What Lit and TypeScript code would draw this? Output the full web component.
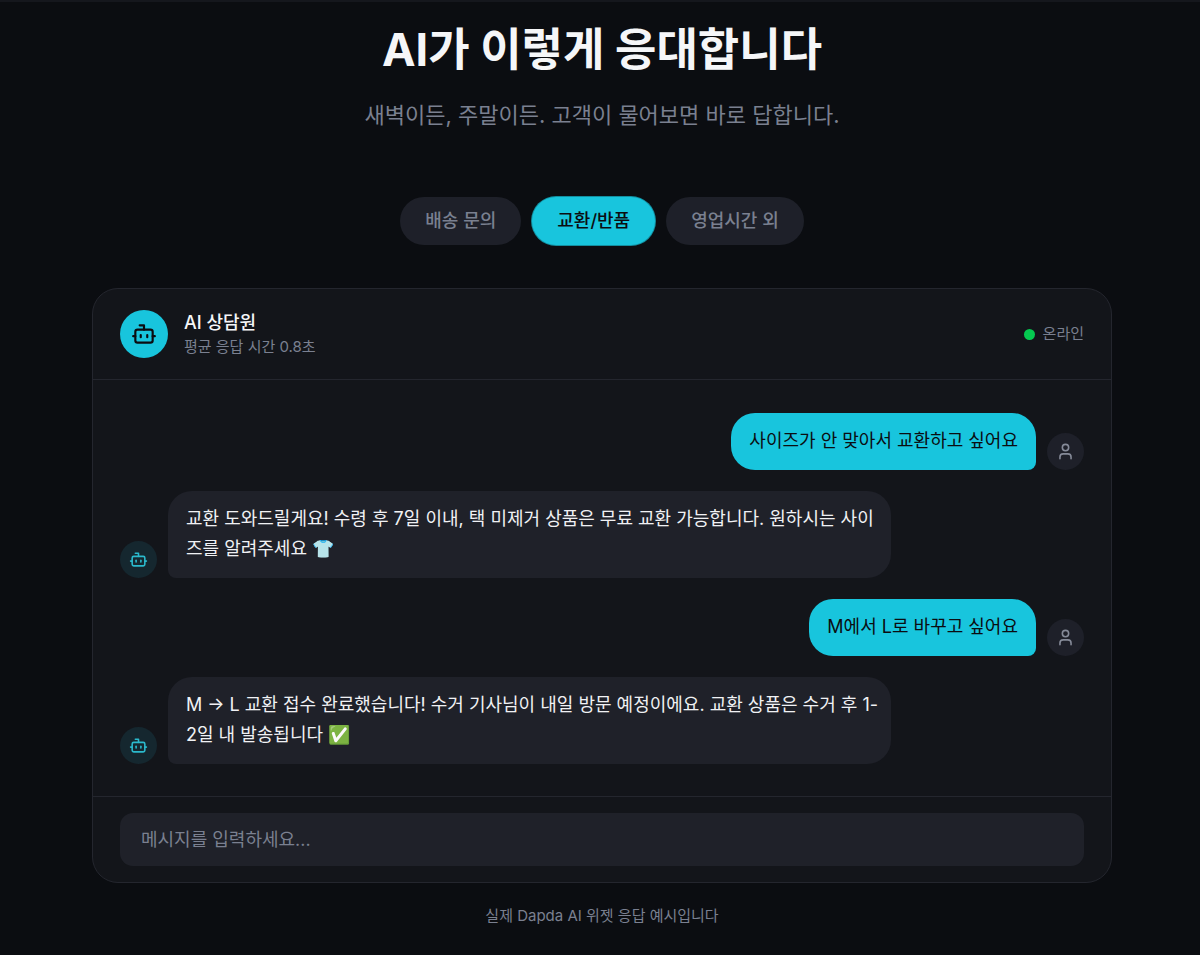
import { LitElement, html, css, svg } from "lit";
import { customElement, property, state } from "lit/decorators.js";
import { classMap } from "lit/directives/class-map.js";

type Message = { from: "user" | "bot"; text: string };

const botShapes = svg`
  <path d="M12 8V4H8"></path>
  <rect width="16" height="12" x="4" y="8" rx="2"></rect>
  <path d="M2 14h2"></path>
  <path d="M20 14h2"></path>
  <path d="M15 13v2"></path>
  <path d="M9 13v2"></path>
`;

const userShapes = svg`
  <path d="M19 21v-2a4 4 0 0 0-4-4H9a4 4 0 0 0-4 4v2"></path>
  <circle cx="12" cy="7" r="4"></circle>
`;

const icon = (name: "bot" | "user") => html`
  <svg class="icon" viewBox="0 0 24 24" aria-hidden="true">
    ${name === "bot" ? botShapes : userShapes}
  </svg>
`;

@customElement("chat-message")
class ChatMessage extends LitElement {
  @property() from: "user" | "bot" = "bot";

  static styles = css`
    :host {
      display: block;
    }
    .row {
      display: flex;
      align-items: flex-end;
      gap: 11px;
    }
    .row.user {
      flex-direction: row-reverse;
    }
    .avatar {
      flex: none;
      display: grid;
      place-items: center;
      width: 37px;
      height: 37px;
      border-radius: 50%;
      background: #15272f;
      color: #2bb9cc;
    }
    .user .avatar {
      background: #1e2029;
      color: #858a98;
    }
    .icon {
      width: 19px;
      height: 19px;
      fill: none;
      stroke: currentColor;
      stroke-width: 2;
      stroke-linecap: round;
      stroke-linejoin: round;
    }
    .bubble {
      box-sizing: border-box;
      max-width: 75%;
      padding: 13px 18px 14px;
      border-radius: 24px 24px 24px 8px;
      background: #1f2129;
      color: #f0f1f4;
      font-size: 18px;
      line-height: 30px;
    }
    .bot .bubble {
      padding-right: 10px;
      width: 75%;
      white-space: pre-line;
    }
    .user .bubble {
      border-radius: 24px 24px 8px 24px;
      background: #18c5dd;
      color: #0b0d11;
    }
  `;

  render() {
    return html`
      <div class="row ${this.from}">
        <span class="avatar">${icon(this.from)}</span>
        <div class="bubble"><slot></slot></div>
      </div>
    `;
  }
}

@customElement("app-root")
class AppRoot extends LitElement {
  @state() private active = 1;

  private tabs = ["배송 문의", "교환/반품", "영업시간 외"];

  private messages: Message[] = [
    { from: "user", text: "사이즈가 안 맞아서 교환하고 싶어요" },
    {
      from: "bot",
      text: "교환 도와드릴게요! 수령 후 7일 이내, 택 미제거 상품은 무료 교환 가능합니다. 원하시는 사이\n즈를 알려주세요 👕",
    },
    { from: "user", text: "M에서 L로 바꾸고 싶어요" },
    {
      from: "bot",
      text: "M → L 교환 접수 완료했습니다! 수거 기사님이 내일 방문 예정이에요. 교환 상품은 수거 후 1-\n2일 내 발송됩니다 ✅",
    },
  ];

  static styles = css`
    :host {
      display: block;
      box-sizing: border-box;
      min-height: 100vh;
      background: #0b0d11;
      font-family: Inter, "Noto Sans CJK KR", sans-serif;
      color: #f5f6f8;
    }
    .demo {
      display: flex;
      flex-direction: column;
      align-items: center;
      padding: 20px 24px 0 28px;
      border-top: 2px solid #15171d;
    }
    h1,
    p {
      margin: 0;
    }
    .title {
      font-size: 45px;
      line-height: 56px;
      font-weight: 700;
      text-align: center;
    }
    .subtitle {
      margin-top: 18px;
      font-size: 22px;
      line-height: 38px;
      color: #7a8090;
      text-align: center;
    }
    .tabs {
      display: flex;
      flex-wrap: wrap;
      justify-content: center;
      gap: 11px;
      margin-top: 63px;
    }
    .tab {
      height: 48px;
      padding: 0 25px;
      border: 0;
      border-radius: 24px;
      background: #1e2029;
      color: #7a8090;
      font: 500 18px/24px Inter, "Noto Sans CJK KR", sans-serif;
      cursor: pointer;
    }
    .tab.active {
      background: #18c5dd;
      color: #0b0d11;
      box-shadow: 0 0 0 1px #138e9f;
    }
    .card {
      box-sizing: border-box;
      width: 100%;
      max-width: 1020px;
      margin-top: 43px;
      border: 1px solid #24262e;
      border-radius: 26px;
      background: #13151a;
      overflow: hidden;
    }
    .head {
      display: flex;
      align-items: center;
      gap: 16px;
      padding: 21px 27px;
      border-bottom: 1px solid #24262e;
    }
    .badge {
      flex: none;
      display: grid;
      place-items: center;
      width: 48px;
      height: 48px;
      border-radius: 50%;
      background: #18c5dd;
      color: #0b0d11;
    }
    .icon {
      width: 26px;
      height: 26px;
      fill: none;
      stroke: currentColor;
      stroke-width: 2;
      stroke-linecap: round;
      stroke-linejoin: round;
    }
    .who {
      flex: 1;
    }
    .name {
      font-size: 18px;
      line-height: 26px;
      font-weight: 500;
    }
    .meta {
      font-size: 15px;
      line-height: 22px;
      color: #7a8090;
    }
    .status {
      display: flex;
      align-items: center;
      gap: 8px;
    }
    .dot {
      width: 11px;
      height: 11px;
      border-radius: 50%;
      background: #05c950;
    }
    .log {
      display: flex;
      flex-direction: column;
      gap: 21px;
      padding: 33px 27px 32px;
    }
    .composer {
      padding: 16px 27px;
      border-top: 1px solid #24262e;
    }
    .field {
      display: block;
      box-sizing: border-box;
      width: 100%;
      height: 53px;
      padding: 0 21px;
      border: 0;
      border-radius: 13px;
      background: #1f2129;
      color: #f0f1f4;
      font: 400 18px/28px Inter, "Noto Sans CJK KR", sans-serif;
    }
    .field::placeholder {
      color: #7a8090;
      opacity: 1;
    }
    .note {
      margin-top: 22px;
    }
  `;

  render() {
    return html`
      <main class="demo">
        <h1 class="title">AI가 이렇게 응대합니다</h1>
        <p class="subtitle">새벽이든, 주말이든. 고객이 물어보면 바로 답합니다.</p>
        <nav class="tabs">
          ${this.tabs.map(
            (label, i) => html`
              <button
                type="button"
                class=${classMap({ tab: true, active: i === this.active })}
                aria-pressed=${i === this.active}
                @click=${() => (this.active = i)}
              >${label}</button>
            `
          )}
        </nav>
        <section class="card">
          <header class="head">
            <span class="badge">${icon("bot")}</span>
            <div class="who">
              <p class="name">AI 상담원</p>
              <p class="meta">평균 응답 시간 0.8초</p>
            </div>
            <div class="status meta"><span class="dot"></span>온라인</div>
          </header>
          <div class="log">
            ${this.messages.map(
              (m) => html`<chat-message from=${m.from}>${m.text}</chat-message>`
            )}
          </div>
          <div class="composer">
            <input class="field" type="text" aria-label="메시지" placeholder="메시지를 입력하세요..." />
          </div>
        </section>
        <p class="note meta">실제 Dapda AI 위젯 응답 예시입니다</p>
      </main>
    `;
  }
}
